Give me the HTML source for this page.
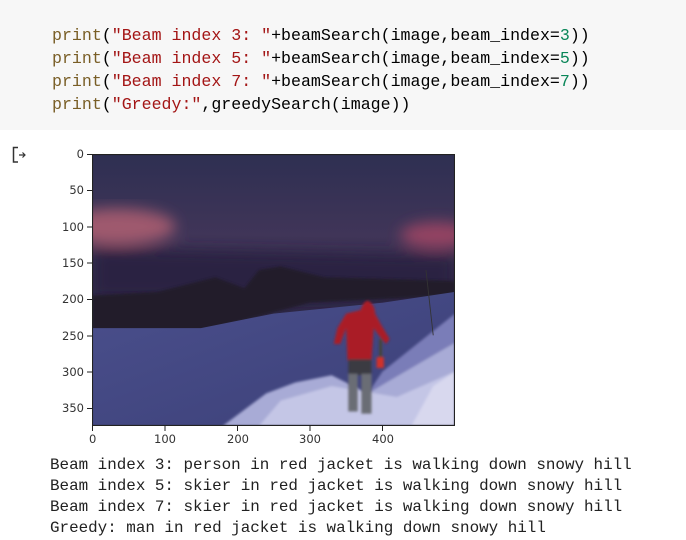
<!DOCTYPE html>
<html><head><meta charset="utf-8"><style>
body{margin:0;width:686px;height:540px;background:#fff;position:relative;overflow:hidden;font-family:"Liberation Mono",monospace}
.code{position:absolute;left:0;top:0;width:686px;height:130px;background:#f7f7f7}
.code pre{position:absolute;left:52px;top:24px;margin:0;font:16.6px/23px "Liberation Mono",monospace;color:#000}
.k{color:#795e26}.s{color:#a31515}.n{color:#098658}
.out{position:absolute;left:50px;top:455px;margin:0;font:15.9px/21px "Liberation Mono",monospace;color:#212121}
.tick{position:absolute;font:11.5px "DejaVu Sans",sans-serif;color:#333}
.yl{right:602px;text-align:right}
</style></head><body>
<div class="code"><pre><span class="k">print</span>(<span class="s">"Beam index 3: "</span>+beamSearch(image,beam_index=<span class="n">3</span>))
<span class="k">print</span>(<span class="s">"Beam index 5: "</span>+beamSearch(image,beam_index=<span class="n">5</span>))
<span class="k">print</span>(<span class="s">"Beam index 7: "</span>+beamSearch(image,beam_index=<span class="n">7</span>))
<span class="k">print</span>(<span class="s">"Greedy:"</span>,greedySearch(image))</pre></div>
<svg style="position:absolute;left:12px;top:146px" width="20" height="18" viewBox="0 0 20 18"><path d="M6 1.5H1.5V16H6" fill="none" stroke="#333" stroke-width="1.5"/><path d="M7 9H13M10.5 6.5L13 9L10.5 11.5" fill="none" stroke="#333" stroke-width="1.2"/></svg>
<svg style="position:absolute;left:92px;top:154px" width="363" height="272" viewBox="0 0 500 375" preserveAspectRatio="none">
<defs>
<linearGradient id="sky" x1="0" y1="0" x2="0" y2="1"><stop offset="0" stop-color="#2e2f52"/><stop offset=".3" stop-color="#403558"/><stop offset=".55" stop-color="#2e2847"/><stop offset="1" stop-color="#221c33"/></linearGradient>
<linearGradient id="snow" x1="0" y1="0" x2="1" y2="1"><stop offset="0" stop-color="#4a4f8c"/><stop offset="1" stop-color="#3c4078"/></linearGradient>
<filter id="b"><feGaussianBlur stdDeviation="10"/></filter>
<filter id="b2"><feGaussianBlur stdDeviation="2"/></filter>
</defs>
<rect width="500" height="375" fill="url(#sky)"/>
<g filter="url(#b)">
<ellipse cx="35" cy="100" rx="80" ry="25" fill="#c86a78" opacity=".7"/>
<ellipse cx="475" cy="112" rx="50" ry="18" fill="#b84a66" opacity=".7"/>
<ellipse cx="250" cy="155" rx="80" ry="7" fill="#8a6a80" opacity=".6"/>
<path d="M0 130 L500 140 L500 200 L0 200Z" fill="#2a2442"/>
</g>
<path d="M0 195 L90 190 L170 170 L210 185 L230 160 L260 155 L320 170 L500 175 L500 195 L300 205 L150 245 L0 245Z" fill="#231c2c" filter="url(#b2)"/>
<path d="M0 240 L150 240 L250 220 L400 205 L500 190 L500 375 L0 375Z" fill="url(#snow)"/>
<g filter="url(#b2)">
<path d="M180 375 L240 330 L280 315 L330 305 L380 330 L430 300 L500 260 L500 375Z" fill="#a8abd6"/>
<path d="M230 375 L260 340 L330 320 L420 335 L500 300 L500 375Z" fill="#c4c6e6"/>
<path d="M380 330 L500 260 L500 220 L400 300Z" fill="#7a7db8"/>
<path d="M440 375 L470 320 L500 300 L500 375Z" fill="#d8d8ee"/>
</g>
<g filter="url(#b2)">
<path d="M370 215 Q375 200 382 203 Q390 210 390 220 L398 235 L410 255 L405 262 L395 250 L388 240 L385 285 L352 285 L350 240 L342 262 L333 262 L338 240 L350 220Z" fill="#aa1f28"/>
<rect x="353" y="283" width="32" height="22" fill="#3a3a42"/>
<rect x="353" y="303" width="13" height="52" fill="#6a6d74"/>
<rect x="371" y="303" width="14" height="55" fill="#6a6d74"/>
<rect x="396" y="255" width="3" height="30" fill="#442"/>
<rect x="392" y="280" width="10" height="15" fill="#d0302a"/>
</g>
<line x1="460" y1="160" x2="470" y2="250" stroke="#333" stroke-width="1.2"/>
<rect x=".5" y=".5" width="499" height="374" fill="none" stroke="#222" stroke-width="1.4" vector-effect="non-scaling-stroke"/>
</svg>
<svg style="position:absolute;left:0;top:0" width="686" height="540">
<g stroke="#222" stroke-width="1">
<line x1="87" y1="154.5" x2="92" y2="154.5"/><line x1="87" y1="190.5" x2="92" y2="190.5"/><line x1="87" y1="227" x2="92" y2="227"/><line x1="87" y1="263" x2="92" y2="263"/><line x1="87" y1="299.5" x2="92" y2="299.5"/><line x1="87" y1="336" x2="92" y2="336"/><line x1="87" y1="372" x2="92" y2="372"/><line x1="87" y1="408.5" x2="92" y2="408.5"/>
<line x1="92.5" y1="426" x2="92.5" y2="431"/><line x1="165" y1="426" x2="165" y2="431"/><line x1="237.5" y1="426" x2="237.5" y2="431"/><line x1="310" y1="426" x2="310" y2="431"/><line x1="382.5" y1="426" x2="382.5" y2="431"/>
</g>
</svg>
<div class="tick yl" style="top:147px">0</div>
<div class="tick yl" style="top:183px">50</div>
<div class="tick yl" style="top:220px">100</div>
<div class="tick yl" style="top:256px">150</div>
<div class="tick yl" style="top:292px">200</div>
<div class="tick yl" style="top:329px">250</div>
<div class="tick yl" style="top:365px">300</div>
<div class="tick yl" style="top:401px">350</div>
<div class="tick" style="top:432px;left:89px">0</div>
<div class="tick" style="top:432px;left:154px">100</div>
<div class="tick" style="top:432px;left:227px">200</div>
<div class="tick" style="top:432px;left:299px">300</div>
<div class="tick" style="top:432px;left:372px">400</div>
<pre class="out">Beam index 3: person in red jacket is walking down snowy hill
Beam index 5: skier in red jacket is walking down snowy hill
Beam index 7: skier in red jacket is walking down snowy hill
Greedy: man in red jacket is walking down snowy hill</pre>
</body></html>
